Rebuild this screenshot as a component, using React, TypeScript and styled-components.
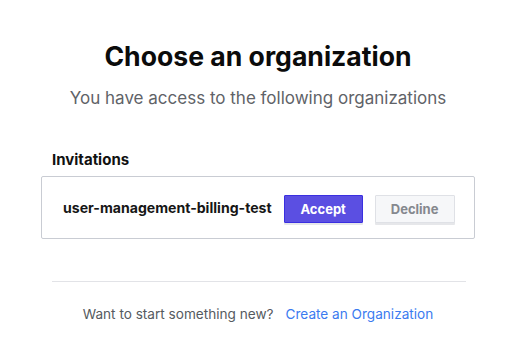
import React from "react";
import styled, { createGlobalStyle } from "styled-components";

const Global = createGlobalStyle`
  html, body { margin: 0; padding: 0; background: #ffffff; }
  body { font-family: Inter, "Noto Sans", sans-serif; color: #111; }
`;

const Page = styled.div`
  width: 434px;
  margin-left: 41px;
  padding-top: 40px;
  display: flex;
  flex-direction: column;
`;

const Title = styled.h1`
  margin: 0;
  text-align: center;
  font-size: 26.6px;
  line-height: 32px;
  font-weight: 700;
  color: #0b0b0b;
`;

const Subtitle = styled.p`
  margin: 14px 0 0;
  text-align: center;
  font-size: 17px;
  line-height: 24px;
  color: #5f6368;
`;

const SectionLabel = styled.h2`
  margin: 40px 0 0 11px;
  font-size: 15px;
  line-height: 20px;
  font-weight: 700;
  color: #111;
`;

const Card = styled.div`
  margin-top: 6px;
  height: 63px;
  box-sizing: border-box;
  border: 1px solid #c9ccd3;
  border-radius: 2px;
  display: flex;
  align-items: center;
  padding-left: 21px;
  gap: 12px;
`;

const OrgName = styled.span`
  font-size: 14.1px;
  font-weight: 700;
  color: #161616;
`;

const Button = styled.button<{ $primary?: boolean }>`
  width: ${(p) => (p.$primary ? "79px" : "80px")};
  height: 28px;
  box-sizing: border-box;
  font-family: inherit;
  font-size: 13px;
  font-weight: 700;
  border-radius: 1px;
  cursor: pointer;
  margin-top: 2px;
  border: 1px solid ${(p) => (p.$primary ? "#3a2fe0" : "#dfe1e6")};
  background: ${(p) => (p.$primary ? "#5b4fe2" : "#f6f7f9")};
  color: ${(p) => (p.$primary ? "#ffffff" : "#85888e")};
  box-shadow: 0 2px 0 #e6e7ea;
`;

const Divider = styled.hr`
  margin: 42px 9px 0 11px;
  border: none;
  border-top: 1px solid #e2e3e7;
`;

const Footer = styled.div`
  margin-top: 22px;
  text-align: center;
  font-size: 13.6px;
  line-height: 20px;
  color: #555a60;
  display: flex;
  justify-content: center;
  gap: 12px;
`;

const Link = styled.a`
  color: #3a7bf0;
  text-decoration: none;
`;

export default function App() {
  return (
    <>
      <Global />
      <Page>
        <Title>Choose an organization</Title>
        <Subtitle>You have access to the following organizations</Subtitle>
        <SectionLabel>Invitations</SectionLabel>
        <Card>
          <OrgName>user-management-billing-test</OrgName>
          <Button $primary>Accept</Button>
          <Button>Decline</Button>
        </Card>
        <Divider />
        <Footer>
          <span>Want to start something new?</span>
          <Link href="#">Create an Organization</Link>
        </Footer>
      </Page>
    </>
  );
}
